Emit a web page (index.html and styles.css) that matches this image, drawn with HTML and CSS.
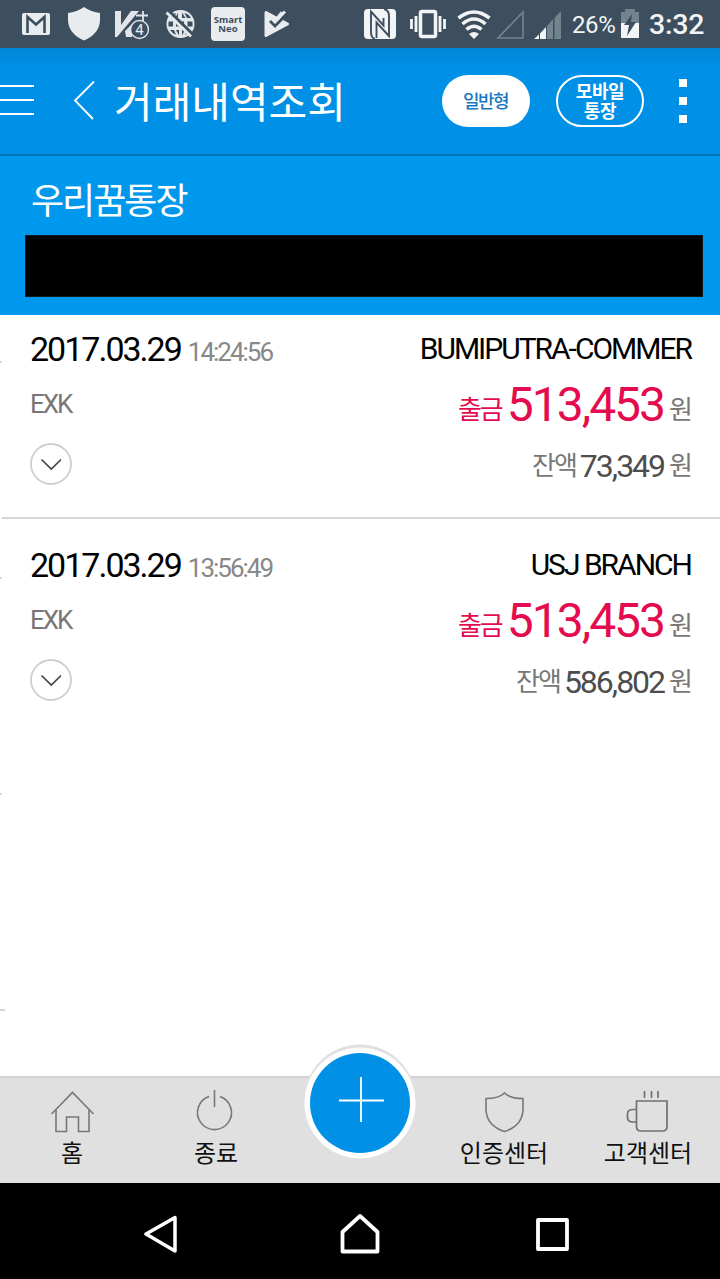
FILE: index.html
```html
<!DOCTYPE html>
<html lang="ko">
<head>
<meta charset="utf-8">
<title>거래내역조회</title>
<link rel="stylesheet" href="styles.css">
</head>
<body>
<div class="screen">
  <div class="status">
    <div class="status-left">
      <svg width="48" height="48"><rect x="10" y="13" width="28" height="22" rx="2" fill="#e9ecee"/><path d="M15.500 33V17L24 24.500L32.500 17V33" fill="none" stroke="#3d4f5f" stroke-width="2.600"/></svg>
      <svg width="48" height="48"><path d="M24 7Q31 12 40 13V21Q39 34 24 40.500Q9 34 8 21V13Q17 12 24 7Z" fill="#e9ecee"/></svg>
      <svg width="48" height="48"><path d="M7 11H13V25L23 11H31L9 37H7ZM17 31L24 24V37H18Z" fill="#e2e6ea"/><path d="M28 15.500H40M35 11V21" stroke="#e2e6ea" stroke-width="1.800"/><circle cx="31.500" cy="29.500" r="9" fill="#3d4f5f" stroke="#e2e6ea" stroke-width="1.400"/><text class="badge-num" x="31.500" y="35">4</text></svg>
      <svg width="48" height="48"><circle cx="24.500" cy="24" r="14" fill="#e4e8eb"/><path d="M20 13Q16 14 14 18H18ZM22 12.500V18H19.500ZM26 12.500V18H29.500ZM28.500 13Q33 14 35 18H31ZM12.500 21.500H17V26.500H12.500ZM20 21.500H28V26.500H20ZM31.500 21.500H36.500V26.500H31.500ZM14 30H18L20 35Q16 33 14 30ZM20 30H23V35.500ZM26 30H29L26 35.500ZM31 30H35Q33 33 29 35Z" fill="#3d4f5f"/><path d="M13 11L37 34.500" stroke="#3d4f5f" stroke-width="3"/><path d="M10.500 12.500L35 36.500" stroke="#e4e8eb" stroke-width="2.800"/></svg>
      <svg width="48" height="48"><rect x="7" y="7" width="34" height="34" rx="4" fill="#e9ecee"/><text class="neo" x="24" y="23">Smart</text><text class="neo" x="24" y="32">Neo</text></svg>
      <svg width="48" height="48"><path d="M14 12.500L35.500 24L14 35.500Z" fill="#e9ecee" stroke="#e9ecee" stroke-width="3" stroke-linejoin="round"/><path d="M26 18L30.500 12.500" stroke="#e9ecee" stroke-width="4"/><path d="M28 8L34 14L38 19L35 22Z" fill="#3d4f5f"/><path d="M25 20L33 11.500" stroke="#e9ecee" stroke-width="3"/><path d="M18 21L23 26L35 14" fill="none" stroke="#3d4f5f" stroke-width="2.800"/></svg>
    </div>
    <div class="status-right">
      <svg width="48" height="48"><rect x="8" y="9" width="32" height="30" rx="4" fill="#f2f4f5"/><path d="M20 39H17Q15 37 15 32V12L28 27V17L23 11V9H28Q33 10 33 16V36L20 22Z" fill="#f2f4f5"/><path d="M19 39Q15 38 15 32V11.500L27.500 25.500V18M28 9Q33 10 33 16V36L20.500 22.500V38" fill="none" stroke="#3d4f5f" stroke-width="1.900"/></svg>
      <svg width="48" height="48"><rect x="16.500" y="11.500" width="15" height="25" rx="1.500" fill="none" stroke="#f2f4f5" stroke-width="3.500"/><path d="M12 16V32M36 16V32M7.500 19V29M40.500 19V29" stroke="#f2f4f5" stroke-width="2.800"/></svg>
      <svg width="44" height="48"><path d="M17 34Q22 30 27 34L22 39Z" fill="#f2f4f5"/><g fill="none" stroke="#f2f4f5" stroke-width="3.600"><path d="M6.500 18Q22 6 37.500 18"/><path d="M10.500 24Q22 14 33.500 24"/><path d="M14.500 29.500Q22 23 29.500 29.500"/></g></svg>
      <svg width="32" height="48"><path d="M2 38H27V12Z" fill="none" stroke="#728391" stroke-width="1.600"/></svg>
      <svg width="44" height="48"><path d="M6 39L11 34.500V39Z M12 33.500L18 27V39H12Z" fill="#f2f4f5"/><path d="M19 26L25 19V39H19ZM26.500 18L33 11V39H26.500Z" fill="#74848f"/></svg>
      <span class="percent">26%</span>
      <svg width="34" height="48"><path d="M6 12H10V9H20V12H24V23H6Z" fill="#74848f"/><path d="M6 23H24V38H6Z" fill="#f2f4f5"/><path d="M17 14L9 25H14L12 36L21 22H16Z" fill="#3d4f5f"/></svg>
      <span class="clock">3:32</span>
    </div>
  </div>

  <header class="header">
    <svg class="menu" width="34" height="42"><path d="M0 6H34M0 20H34M0 34H34" stroke="#fff" stroke-width="2"/></svg>
    <svg class="back" width="22" height="40"><path d="M20 0.500L1 19.500L19 38" fill="none" stroke="#fff" stroke-width="1.800"/></svg>
    <h1 class="title">거래내역조회</h1>
    <div class="pill pill-solid">일반형</div>
    <div class="pill pill-line">모바일<br>통장</div>
    <div class="more"><i></i><i></i><i></i></div>
  </header>

  <section class="account">
    <h2 class="account-name">우리꿈통장</h2>
    <div class="account-mask"></div>
  </section>

  <main class="list">
    <article class="item item-first">
      <div class="col-left">
        <div class="when">2017.03.29<span class="time">14:24:56</span></div>
        <div class="kind">EXK</div>
        <svg class="expand" width="42" height="42"><circle cx="21" cy="21" r="20" fill="none" stroke="#cfcfcf" stroke-width="1.800"/><path d="M11.500 16.500L21.300 26L31 16.500" fill="none" stroke="#444" stroke-width="1.700"/></svg>
      </div>
      <div class="col-right">
        <div class="payee">BUMIPUTRA-COMMER</div>
        <div class="amount"><span class="ko red">출금</span><b>513,453</b><span class="ko">원</span></div>
        <div class="balance"><span class="ko">잔액</span><b>73,349</b><span class="ko">원</span></div>
      </div>
      <i class="tick"></i>
    </article>
    <article class="item">
      <div class="col-left">
        <div class="when">2017.03.29<span class="time">13:56:49</span></div>
        <div class="kind">EXK</div>
        <svg class="expand" width="42" height="42"><circle cx="21" cy="21" r="20" fill="none" stroke="#cfcfcf" stroke-width="1.800"/><path d="M11.500 16.500L21.300 26L31 16.500" fill="none" stroke="#444" stroke-width="1.700"/></svg>
      </div>
      <div class="col-right">
        <div class="payee">USJ BRANCH</div>
        <div class="amount"><span class="ko red">출금</span><b>513,453</b><span class="ko">원</span></div>
        <div class="balance"><span class="ko">잔액</span><b>586,802</b><span class="ko">원</span></div>
      </div>
      <i class="tick"></i>
    </article>
    <div class="blank"><i class="tick"></i></div>
    <div class="blank"><i class="tick tick-long"></i></div>
  </main>

  <nav class="tabs">
    <div class="tab"><svg width="48" height="48"><g fill="none" stroke="#777" stroke-width="1.600"><path d="M3.500 26L24.500 4.500L45.500 26"/><path d="M8 22V43.500H18.500V29H30.500V43.500H41V22"/></g></svg><span>홈</span></div>
    <div class="tab"><svg width="48" height="48"><g fill="none" stroke="#777" stroke-width="1.600"><path d="M17 8.500A17 17 0 1 0 28 8.500"/><path d="M22.500 2V19"/></g></svg><span>종료</span></div>
    <div class="tab"></div>
    <div class="tab"><svg width="48" height="48"><path d="M24.500 5Q19 10.500 6 10.500V22Q7 38 24.500 43.500Q42 38 43 22V10.500Q30 10.500 24.500 5Z" fill="none" stroke="#777" stroke-width="1.600"/></svg><span>인증센터</span></div>
    <div class="tab"><svg width="48" height="48"><g fill="none" stroke="#707070" stroke-width="1.700"><path d="M12.500 13H43V38.500Q43 43 38.500 43H17Q12.500 43 12.500 38.500Z"/><path d="M12.500 21.500H9Q3.500 21.500 3.500 26V29.500Q3.500 34 9 34H12.500M20.500 3V10M27.500 3V10M34 3V10"/></g></svg><span>고객센터</span></div>
    <svg class="plus" width="114" height="118" viewBox="303 1043 114 118"><circle cx="360" cy="1100.500" r="56" fill="#e0e0e0"/><circle cx="360" cy="1103" r="55.500" fill="#fff"/><circle cx="360" cy="1103" r="50" fill="#0091e6"/><path d="M339 1100.500H384M361 1077V1122" stroke="#fff" stroke-width="1.800"/></svg>
  </nav>

  <div class="softkeys">
    <svg width="48" height="48"><path d="M2 24L31 7.500V41Z" fill="none" stroke="#fff" stroke-width="3.500" stroke-linejoin="round"/></svg>
    <svg width="48" height="48"><path d="M24 6L41.500 22V41.500H6.500V22Z" fill="none" stroke="#fff" stroke-width="3.800" stroke-linejoin="round"/></svg>
    <svg width="48" height="48"><rect x="10" y="10" width="29" height="29" fill="none" stroke="#fff" stroke-width="3.800" stroke-linejoin="round"/></svg>
  </div>
</div>
</body>
</html>
```
FILE: styles.css
```css
* { box-sizing: border-box; }
body { margin: 0; font-family: Roboto, "Noto Sans CJK KR", sans-serif; background: #fff; }
svg { display: block; flex: none; }
h1, h2 { margin: 0; font-weight: 400; }
b { font-weight: 400; }
.screen { width: 720px; height: 1279px; display: flex; flex-direction: column; overflow: hidden; }

.status { height: 48px; flex: none; display: flex; justify-content: space-between; background: #3d4f5f; color: #f2f4f5; padding-left: 12px; }
.status-left { display: flex; }
.status-right { display: flex; width: 364px; }
.badge-num { font: 15px Roboto, sans-serif; fill: #e9ecee; text-anchor: middle; }
.neo { font: 700 9.500px "Noto Sans", sans-serif; fill: #3d4f5f; text-anchor: middle; }
.percent { width: 43px; font-size: 24px; line-height: 51px; letter-spacing: -0.400px; white-space: nowrap; }
.clock { font-size: 28.500px; font-weight: 500; line-height: 50px; letter-spacing: -0.200px; white-space: nowrap; }

.header { height: 108px; flex: none; display: flex; align-items: center; background: linear-gradient(#0086d9, #0091e6 22px); border-bottom: 2px solid #0073bb; color: #fff; }
.back { margin-left: 40px; }
.title { width: 328px; margin-left: 18px; padding-bottom: 2px; font: 400 42px/60px "Noto Sans CJK KR", sans-serif; }
.pill { width: 88px; height: 52px; border-radius: 26px; flex: none; display: flex; align-items: center; justify-content: center; text-align: center; font: 700 18px/20px "Noto Sans CJK KR", sans-serif; }
.pill-solid { padding: 0 1px 2px 0; background: #fff; color: #1878c4; font-weight: 500; letter-spacing: -1.500px; }
.pill-line { margin-left: 26px; padding-bottom: 2px; border: 2px solid #fff; letter-spacing: -0.400px; }
.more { margin-left: 35px; display: grid; gap: 10px; }
.more i { width: 8px; height: 8px; background: #fff; }

.account { height: 159px; flex: none; background: #0098ec; padding: 15px 17px 0 25px; }
.account-name { padding-left: 6px; height: 64px; font: 400 36px/54px "Noto Sans CJK KR", sans-serif; letter-spacing: -2px; color: #fff; }
.account-mask { height: 62px; background: #000; border: 1px solid #151a20; }

.list { flex: 1; min-height: 0; overflow: hidden; }
.item { position: relative; height: 216px; margin-left: 2px; padding: 26px 29px 0 28px; display: flex; justify-content: space-between; letter-spacing: -2px; }
.item-first { height: 204px; padding-top: 14px; border-bottom: 2px solid #d5d5d5; }
.when { height: 40px; font-size: 34px; line-height: 40px; color: #000; }
.time { margin-left: 7px; font-size: 26px; color: #888; }
.kind { margin-top: 15px; font-size: 26px; line-height: 40px; color: #777; }
.expand { margin-top: 19px; }
.col-right { text-align: right; }
.payee { height: 40px; font-size: 30px; line-height: 40px; color: #000; }
.ko { font: 400 26px/1 "Noto Sans CJK KR", sans-serif; color: #777; vertical-align: 2px; }
.red { color: #e40c4e; }
.amount { height: 50px; margin-top: 11px; font-size: 48px; line-height: 50px; color: #e40c4e; }
.amount b { margin: 0 5px 0 5px; }
.balance { height: 40px; margin-top: 16px; font-size: 32px; line-height: 40px; color: #4d4d4d; }
.balance b { margin: 0 5px 0 4px; }
.blank { position: relative; height: 216px; margin-left: 2px; }
.tick { position: absolute; left: -2px; top: 58px; width: 2px; height: 2px; background: #d5d5d5; }
.item-first .tick { top: 46px; }
.tick-long { width: 5px; }

.tabs { position: relative; height: 107px; flex: none; display: grid; grid-template-columns: repeat(5, 144px); background: #e0e0e0; border-top: 2px solid #d2d2d2; }
.tab { display: flex; flex-direction: column; align-items: center; padding-top: 10px; font: 400 24px/32px "Noto Sans CJK KR", sans-serif; color: #111; }
.plus { position: absolute; left: 303px; top: -35px; }

.softkeys { height: 96px; flex: none; display: flex; justify-content: center; align-items: center; gap: 144px; background: #000; padding-top: 6px; }
```
